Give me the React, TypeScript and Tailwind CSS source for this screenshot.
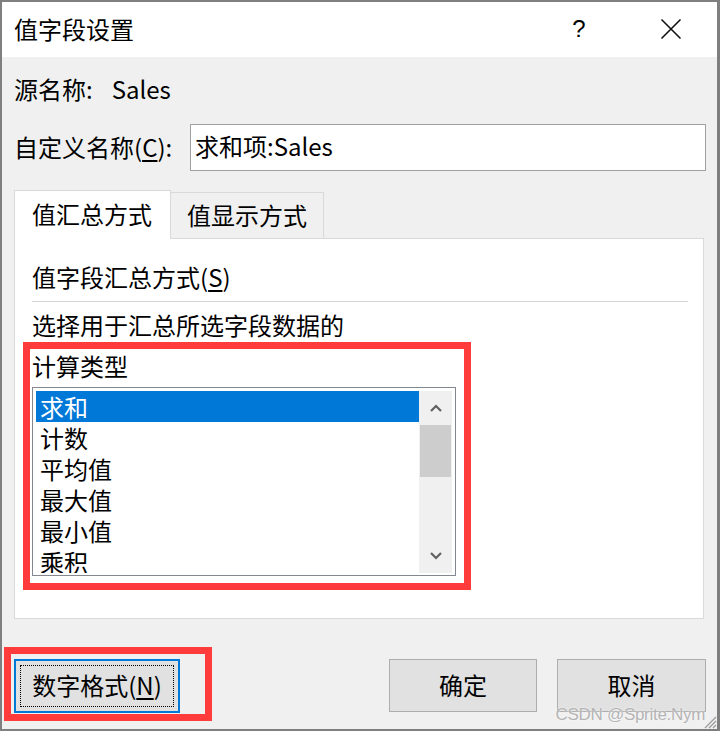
import React from "react";

const items = ["求和", "计数", "平均值", "最大值", "最小值", "乘积"];

const Chevron = ({ up }: { up?: boolean }) => (
  <svg width="12" height="8" viewBox="0 0 12 8">
    <path
      d={up ? "M1 7 L6 2 L11 7" : "M1 1 L6 6 L11 1"}
      fill="none"
      stroke="#606060"
      strokeWidth="2.2"
    />
  </svg>
);

const App = () => {
  return (
    <div className="relative w-[720px] h-[731px] flex flex-col bg-[#f0f0f0] border-t-2 border-b-2 border-l-2 border-r-[3px] border-[#7f7f7f] text-black font-['Noto_Sans_CJK_SC','Noto_Sans',sans-serif]">
      {/* title bar */}
      <div className="h-[55px] shrink-0 bg-white flex items-center">
        <div className="pl-[12px] text-[24px] leading-[30px] -mt-[2px]">值字段设置</div>
        <div className="ml-auto flex h-full">
          <div className="w-[92px] flex items-center justify-center text-[24px] leading-[30px] -mt-[2px] font-['Liberation_Sans',sans-serif]">
            ?
          </div>
          <div className="w-[92px] flex items-center justify-center -mt-[2px]">
            <svg width="22" height="22" viewBox="0 0 22 22">
              <path d="M1.5 1.5 L20.5 20.5 M20.5 1.5 L1.5 20.5" stroke="#111" strokeWidth="1.6" />
            </svg>
          </div>
        </div>
      </div>

      {/* body */}
      <div className="flex flex-col pl-[12px] pr-[11px]">
        <div className="mt-[17px] h-[30px] flex items-center text-[24px] leading-[30px]">
          <span>源名称:</span>
          <span className="ml-[19px]">Sales</span>
        </div>

        <div className="mt-[20px] flex items-center h-[47px]">
          <div className="w-[176px] text-[24px] leading-[30px] -mt-[2px]">
            自定义名称(<u className="underline-offset-[3px]">C</u>):
          </div>
          <div className="flex-1 h-[47px] bg-white border border-[#a0a0a0] flex items-center pl-[4px] pb-[3px] text-[24px] leading-[30px]">
            求和项:Sales
          </div>
        </div>

        {/* tabs */}
        <div className="mt-[19px] flex items-end h-[48px]">
          <div className="w-[157px] h-[49px] -mb-px bg-white border border-b-0 border-[#d9d9d9] relative z-10 flex items-center pl-[17px] pb-[2px] text-[24px] leading-[30px]">
            值汇总方式
          </div>
          <div className="w-[153px] h-[46px] bg-[#f0f0f0] border-t border-r border-[#d9d9d9] flex items-center pl-[16px] pb-[1px] text-[24px] leading-[30px]">
            值显示方式
          </div>
        </div>

        {/* panel */}
        <div className="w-[690px] h-[381px] bg-white border border-[#d9d9d9] flex flex-col">
          <div className="ml-[17px] mt-[23px] text-[24px] leading-[30px]">
            值字段汇总方式(<u className="underline-offset-[3px]">S</u>)
          </div>
          <div className="ml-[17px] mr-[15px] mt-[9px] h-px bg-[#d5d5d5]" />
          <div className="ml-[17px] mt-[8px] text-[24px] leading-[30px]">选择用于汇总所选字段数据的</div>

          <div className="ml-[8px] mt-[2px] w-[448px] border-[7px] border-[#ff3b3b] pl-[2px] pb-[7px]">
            <div className="text-[24px] leading-[36px] -mt-[1px] mb-[1px]">计算类型</div>
            <div className="mt-[3px] w-[424px] h-[189px] border border-[#828790] bg-white flex pt-[3px] pl-[3px] pr-[3px]">
              <div className="w-[383px] h-[182px] overflow-hidden">
                {items.map((t, i) => (
                  <div
                    key={t}
                    className={`h-[31px] pl-[4px] text-[24px] leading-[31px] ${
                      i === 0 ? "bg-[#0078d7] text-white" : ""
                    }`}
                  >
                    {t}
                  </div>
                ))}
              </div>
              <div className="w-[33px] h-[182px] bg-[#f0f0f0] flex flex-col">
                <div className="h-[34px] flex items-center justify-center">
                  <Chevron up />
                </div>
                <div className="mx-[1px] h-[52px] bg-[#cdcdcd]" />
                <div className="flex-1" />
                <div className="h-[34px] flex items-center justify-center">
                  <Chevron />
                </div>
              </div>
            </div>
          </div>
        </div>

        {/* buttons */}
        <div className="mt-[28px] flex items-start">
          <div className="-ml-[10px] border-[7px] border-[#ff3b3b] pt-[5px] pl-[3px] pr-[25px] pb-px">
            <div className="w-[166px] h-[54px] border-2 border-[#0078d7] bg-[#e1e1e1] p-[4px]">
              <div className="h-full border border-dotted border-black flex items-center justify-center pb-[2px] text-[24px] leading-[30px]">
                数字格式(<u className="underline-offset-[3px]">N</u>)
              </div>
            </div>
          </div>
          <div className="ml-auto mt-[12px] flex gap-[20px]">
            <div className="w-[148px] h-[53px] border border-[#adadad] bg-[#e1e1e1] flex items-center justify-center pb-[2px] text-[24px] leading-[30px]">
              确定
            </div>
            <div className="w-[149px] h-[53px] border border-[#adadad] bg-[#e1e1e1] flex items-center justify-center pb-[2px] text-[24px] leading-[30px]">
              取消
            </div>
          </div>
        </div>
      </div>

      {/* watermark */}
      <div className="absolute right-[12px] bottom-[4px] text-[17px] leading-[20px] tracking-[-0.3px] text-[#b4b4b4] font-['Liberation_Sans',sans-serif] [text-shadow:0_0_2px_#fff]">
        CSDN @Sprite.Nym
      </div>
      {/* resize grip */}
      <svg className="absolute right-0 bottom-0" width="14" height="14" viewBox="0 0 14 14">
        <path d="M13 2 L2 13 M13 6 L6 13 M13 10 L10 13" stroke="#9a9a9a" strokeWidth="1.2" />
      </svg>
    </div>
  );
};

export default App;
